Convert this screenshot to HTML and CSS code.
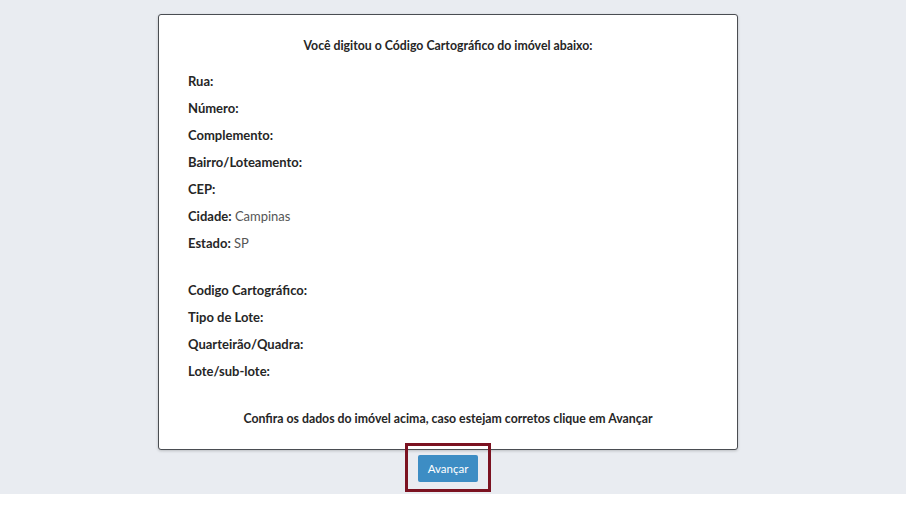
FILE: index.html
```html
<!DOCTYPE html>
<html lang="pt-BR">
<head>
    <meta charset="UTF-8">
    <meta name="viewport" content="width=device-width, initial-scale=1.0">
    <title>Consulta de Imóvel</title>
    <link rel="stylesheet" href="styles.css">
</head>
<body>
    <div class="page">
        <div class="card">
            <h1 class="card-title">Você digitou o Código Cartográfico do imóvel abaixo:</h1>

            <div class="info-group">
                <div class="info-row"><span class="label">Rua:</span> <span class="value"></span></div>
                <div class="info-row"><span class="label">Número:</span> <span class="value"></span></div>
                <div class="info-row"><span class="label">Complemento:</span> <span class="value"></span></div>
                <div class="info-row"><span class="label">Bairro/Loteamento:</span> <span class="value"></span></div>
                <div class="info-row"><span class="label">CEP:</span> <span class="value"></span></div>
                <div class="info-row"><span class="label">Cidade:</span> <span class="value">Campinas</span></div>
                <div class="info-row"><span class="label">Estado:</span> <span class="value">SP</span></div>
            </div>

            <div class="info-group">
                <div class="info-row"><span class="label">Codigo Cartográfico:</span> <span class="value"></span></div>
                <div class="info-row"><span class="label">Tipo de Lote:</span> <span class="value"></span></div>
                <div class="info-row"><span class="label">Quarteirão/Quadra:</span> <span class="value"></span></div>
                <div class="info-row"><span class="label">Lote/sub-lote:</span> <span class="value"></span></div>
            </div>

            <p class="confirm">Confira os dados do imóvel acima, caso estejam corretos clique em Avançar</p>
        </div>

        <div class="actions">
            <div class="highlight">
                <button class="btn-next">Avançar</button>
            </div>
        </div>
    </div>
</body>
</html>
```

FILE: styles.css
```css
body {
    margin: 0;
    font-family: 'Lato', 'Open Sans', sans-serif;
    background-color: #ffffff;
    color: #333;
}

.page {
    height: 494px;
    padding: 14px 10px 0 0;
    box-sizing: border-box;
    background-color: #e9ecf1;
}

.card {
    width: 580px;
    margin: 0 auto;
    box-sizing: border-box;
    background-color: #fff;
    border: 1.5px solid #4a4d52;
    border-radius: 3px;
    box-shadow: 0 1px 3px rgba(0, 0, 0, 0.2);
    padding: 23px 29px 22px;
}

.card-title {
    margin: 0 0 20px;
    text-align: center;
    font-size: 12.3px;
    font-weight: bold;
    color: #262626;
}

.info-group {
    margin-bottom: 20px;
}

.info-row {
    height: 27px;
    line-height: 17px;
    font-size: 13px;
}

.label {
    font-weight: bold;
    color: #262626;
}

.value {
    color: #555;
}

.confirm {
    margin: 0;
    text-align: center;
    font-size: 12.3px;
    line-height: 17px;
    font-weight: bold;
    color: #262626;
}

.actions {
    display: flex;
    justify-content: center;
    margin-top: -7px;
}

.highlight {
    border: 3px solid #7b1221;
    padding: 9px 10px 7px;
}

.btn-next {
    background-color: #3d8dc4;
    color: #fff;
    border: none;
    border-radius: 2px;
    padding: 0;
    width: 60px;
    height: 27px;
    font-family: inherit;
    font-size: 11.5px;
    cursor: pointer;
}
```
